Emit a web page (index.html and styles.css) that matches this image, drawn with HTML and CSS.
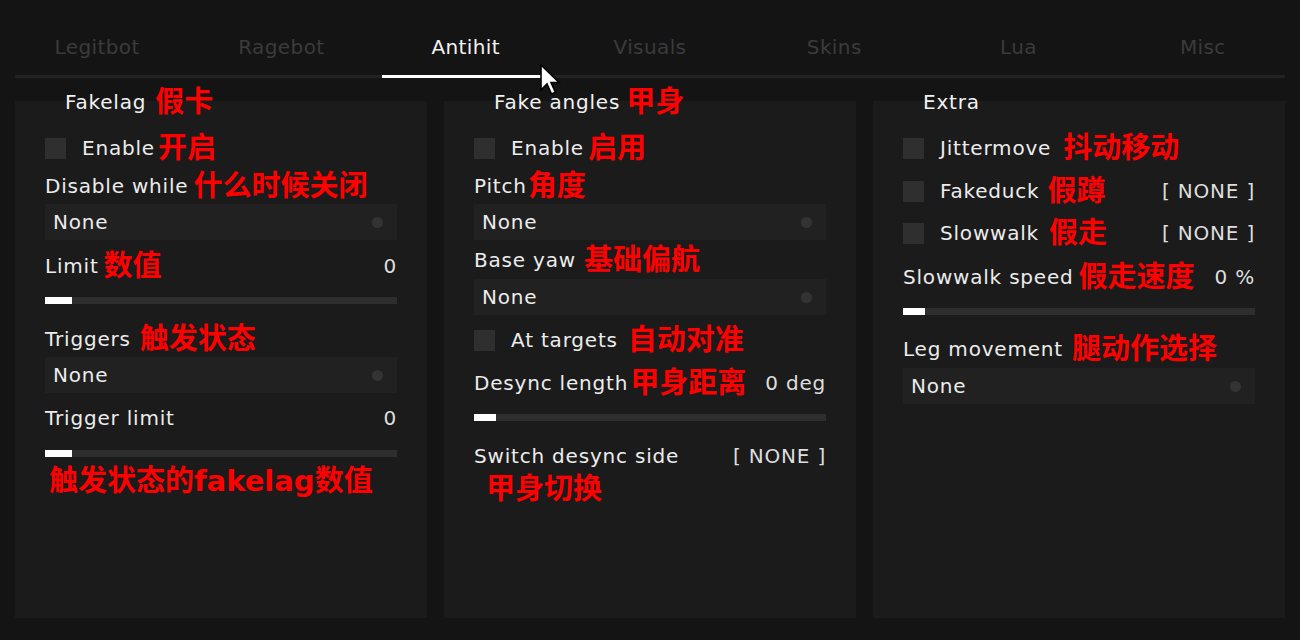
FILE: index.html
```html
<!DOCTYPE html>
<html lang="en">
<head>
<meta charset="utf-8">
<title>Antihit</title>
<link rel="stylesheet" href="styles.css">
</head>
<body>
<div class="app">
  <nav class="tabs">
    <div class="tab">Legitbot</div>
    <div class="tab">Ragebot</div>
    <div class="tab active">Antihit</div>
    <div class="tab">Visuals</div>
    <div class="tab">Skins</div>
    <div class="tab">Lua</div>
    <div class="tab">Misc</div>
  </nav>
  <div class="tabline"><div class="tabline-active"></div></div>

  <div class="panels">
    <section class="panel">
      <h2 class="panel-title">Fakelag<span class="note g9">假卡</span></h2>
      <div class="row check-row mt20"><span class="box"></span>Enable<span class="note g3">开启</span></div>
      <div class="row mt14">Disable while<span class="note g5">什么时候关闭</span></div>
      <div class="select mt5"><span>None</span><span class="dot"></span></div>
      <div class="row mt13">Limit<span class="note g5">数值</span><span class="value">0</span></div>
      <div class="slider mt18"><div class="slider-fill" style="width:27px"></div></div>
      <div class="row mt22">Triggers<span class="note g9">触发状态</span></div>
      <div class="select mt5"><span>None</span><span class="dot"></span></div>
      <div class="row mt12">Trigger limit<span class="value">0</span></div>
      <div class="slider mt19"><div class="slider-fill" style="width:27px"></div></div>
      <div class="row note-row note-left mt9"><span class="note">触发状态的fakelag数值</span></div>
    </section>

    <section class="panel">
      <h2 class="panel-title">Fake angles<span class="note g6">甲身</span></h2>
      <div class="row check-row mt20"><span class="box"></span>Enable<span class="note g4">启用</span></div>
      <div class="row mt14">Pitch<span class="note g1">角度</span></div>
      <div class="select mt5"><span>None</span><span class="dot"></span></div>
      <div class="row mt7">Base yaw<span class="note g8">基础偏航</span></div>
      <div class="select mt6"><span>None</span><span class="dot"></span></div>
      <div class="row check-row mt14"><span class="box"></span>At targets<span class="note g10">自动对准</span></div>
      <div class="row mt19">Desync length<span class="note g2">甲身距离</span><span class="value">0 deg</span></div>
      <div class="slider mt18"><div class="slider-fill" style="width:22px"></div></div>
      <div class="row mt22">Switch desync side<span class="value">[ NONE ]</span></div>
      <div class="row note-row note-mid mt5"><span class="note">甲身切换</span></div>
    </section>

    <section class="panel">
      <h2 class="panel-title">Extra</h2>
      <div class="row check-row mt20"><span class="box"></span>Jittermove<span class="note g12">抖动移动</span></div>
      <div class="row check-row mt21"><span class="box"></span>Fakeduck<span class="note g8">假蹲</span><span class="value">[ NONE ]</span></div>
      <div class="row check-row mt20"><span class="box"></span>Slowwalk<span class="note g10">假走</span><span class="value">[ NONE ]</span></div>
      <div class="row mt20">Slowwalk speed<span class="note g5">假走速度</span><span class="value">0 %</span></div>
      <div class="slider mt18"><div class="slider-fill" style="width:22px"></div></div>
      <div class="row mt21">Leg movement<span class="note g9">腿动作选择</span></div>
      <div class="select mt6"><span>None</span><span class="dot"></span></div>
    </section>
  </div>

  <svg class="cursor" width="22" height="32" viewBox="0 0 22 32">
    <path d="M1 1 V26 L7 20 L11.5 30 L15.5 28.3 L11 18.5 H19 Z" fill="#ffffff" stroke="#000000" stroke-width="1.6" stroke-linejoin="miter"/>
  </svg>
</div>
</body>
</html>
```

FILE: styles.css
```css
* { box-sizing: border-box; }

html, body {
  margin: 0;
  padding: 0;
}

body {
  background: #141414;
  font-family: "DejaVu Sans", "Noto Sans CJK SC", sans-serif;
  font-size: 20px;
  letter-spacing: 0.8px;
  color: #ececec;
  width: 1300px;
  height: 640px;
  overflow: hidden;
}

.app {
  position: relative;
  height: 640px;
  padding: 0 15px;
}

/* tabs */
.tabs {
  display: flex;
  margin: 0 -10px;
  padding-top: 32px;
}

.tab {
  flex: 1;
  text-align: center;
  line-height: 30px;
  height: 30px;
  color: #3b3b3b;
  letter-spacing: 0.4px;
}

.tab.active {
  color: #f2f2f2;
}

.tabline {
  display: flex;
  margin-top: 13px;
  height: 3px;
  background: #222222;
}

.tabline-active {
  margin-left: 367px;
  width: 168px;
  background: #ffffff;
}

/* panels */
.panels {
  display: grid;
  grid-template-columns: repeat(3, 412px);
  column-gap: 17px;
  margin-top: 23px;
}

.panel {
  background: #1b1b1b;
  height: 517px;
  padding: 0 30px;
}

.panel-title {
  display: flex;
  align-items: center;
  height: 30px;
  margin: -14px 0 0 20px;
  font-size: 20px;
  font-weight: normal;
  color: #f2f2f2;
  white-space: nowrap;
}

.row {
  display: flex;
  align-items: center;
  height: 26px;
  white-space: nowrap;
}

.check-row {
  height: 22px;
}

.box {
  flex: none;
  width: 21px;
  height: 21px;
  margin-right: 16px;
  background: #2f2f2f;
}

.note {
  color: #ff0000;
  font-family: "DejaVu Sans", "Noto Sans CJK SC", sans-serif;
  font-weight: bold;
  font-size: 29px;
  line-height: 1;
  letter-spacing: 0;
}

/* gap between a label and its red annotation */
.g1 { margin-left: 1px; }
.g2 { margin-left: 2px; }
.g3 { margin-left: 3px; }
.g4 { margin-left: 4px; }
.g5 { margin-left: 5px; }
.g6 { margin-left: 6px; }
.g8 { margin-left: 8px; }
.g9 { margin-left: 9px; }
.g10 { margin-left: 10px; }
.g12 { margin-left: 12px; }

.note-row {
  height: 30px;
}

.note-left {
  padding-left: 4px;
}

.note-mid {
  padding-left: 12px;
}

.value {
  margin-left: auto;
  color: #dedede;
}

.select {
  display: flex;
  align-items: center;
  justify-content: space-between;
  height: 36px;
  padding: 0 14px 0 8px;
  background: #212121;
}

.dot {
  width: 11px;
  height: 11px;
  border-radius: 50%;
  background: #333333;
}

.slider {
  display: flex;
  height: 7px;
  background: #2e2e2e;
}

.slider-fill {
  background: #ffffff;
}

/* spacing */
.mt5 { margin-top: 5px; }
.mt6 { margin-top: 6px; }
.mt7 { margin-top: 7px; }
.mt9 { margin-top: 9px; }
.mt12 { margin-top: 12px; }
.mt13 { margin-top: 13px; }
.mt14 { margin-top: 14px; }
.mt18 { margin-top: 18px; }
.mt19 { margin-top: 19px; }
.mt20 { margin-top: 20px; }
.mt21 { margin-top: 21px; }
.mt22 { margin-top: 22px; }

/* mouse pointer overlay */
.cursor {
  position: absolute;
  left: 540px;
  top: 64px;
}
```
